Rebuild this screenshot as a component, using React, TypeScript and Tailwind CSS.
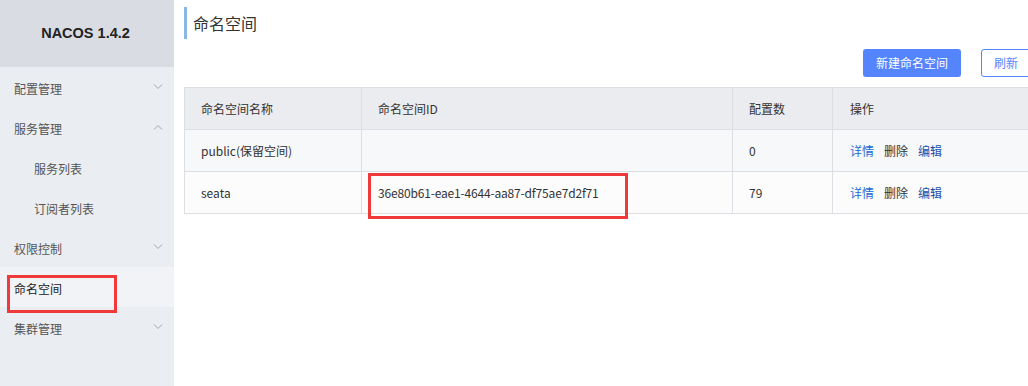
import React from "react";

const font = { fontFamily: '"Noto Sans CJK SC", "Liberation Sans", sans-serif' };

function Chevron({ up = false }: { up?: boolean }) {
  return (
    <svg width="10" height="6" viewBox="0 0 10 6" className="text-[#a0a4ab]">
      {up ? (
        <path d="M1 5.5 L5 1.5 L9 5.5" fill="none" stroke="currentColor" strokeWidth="1" />
      ) : (
        <path d="M1 0.5 L5 4.5 L9 0.5" fill="none" stroke="currentColor" strokeWidth="1" />
      )}
    </svg>
  );
}

function NavItem({
  label,
  sub = false,
  chevron,
  active = false,
  boxed = false,
}: {
  label: string;
  sub?: boolean;
  chevron?: "up" | "down";
  active?: boolean;
  boxed?: boolean;
}) {
  return (
    <div
      className={`relative h-[40px] flex items-center justify-between pr-[11px] ${sub ? "pl-[34px]" : "pl-[14px]"} ${active ? "bg-[#f2f3f6] text-[#222]" : "text-[#555]"}`}
    >
      <span className="text-[12px] pt-[3px]">{label}</span>
      {chevron && <Chevron up={chevron === "up"} />}
      {boxed && (
        <div className="absolute left-[7px] top-[8px] w-[110px] h-[38px] border-[3px] border-[#f03a3a]" />
      )}
    </div>
  );
}

export default function App() {
  const rows = [
    { name: "public(保留空间)", id: "", count: "0", bg: "bg-[#f7f8fa]" },
    { name: "seata", id: "36e80b61-eae1-4644-aa87-df75ae7d2f71", count: "79", bg: "bg-[#fcfcfd]" },
  ];
  return (
    <div className="w-[1028px] h-[386px] flex overflow-hidden bg-white" style={font}>
      <aside className="w-[174px] shrink-0 bg-[#eaedf1] flex flex-col">
        <div className="h-[67px] bg-[#d9dde3] flex items-center justify-center">
          <span
            className="font-bold text-[#222] pr-[3px]"
            style={{ fontFamily: '"Liberation Sans", sans-serif', fontSize: "14.5px" }}
          >
            NACOS 1.4.2
          </span>
        </div>
        <NavItem label="配置管理" chevron="down" />
        <NavItem label="服务管理" chevron="up" />
        <NavItem label="服务列表" sub />
        <NavItem label="订阅者列表" sub />
        <NavItem label="权限控制" chevron="down" />
        <NavItem label="命名空间" active boxed />
        <NavItem label="集群管理" chevron="down" />
      </aside>
      <main className="flex-1 min-w-0 overflow-hidden">
        <div className="w-[870px] pl-[10px]">
          <div className="mt-[7px] h-[32px] border-l-[3px] border-[#8ab8e4] pl-[6px] flex items-center">
            <span className="text-[16px] text-[#333]">命名空间</span>
          </div>
          <div className="mt-[10px] flex justify-end gap-[20px] pr-[13px]">
            <button className="w-[98px] h-[28px] rounded-[3px] bg-[#5584ff] text-white text-[12px]">
              新建命名空间
            </button>
            <button className="w-[50px] h-[28px] rounded-[3px] border border-[#5584ff] bg-white text-[#5584ff] text-[12px]">
              刷新
            </button>
          </div>
          <div className="mt-[10px] w-[860px] border-l border-t border-[#dcdee3] text-[12px] text-[#333]">
            <div className="grid grid-cols-[177px_371px_100px_212px] h-[42px] bg-[#ebecf0] border-b border-[#dcdee3]">
              <div className="flex items-center pl-[16px] border-r border-[#dcdee3]">命名空间名称</div>
              <div className="flex items-center pl-[16px] border-r border-[#dcdee3]">命名空间ID</div>
              <div className="flex items-center pl-[16px] border-r border-[#dcdee3]">配置数</div>
              <div className="flex items-center pl-[17px]">操作</div>
            </div>
            {rows.map((r, i) => (
              <div
                key={i}
                className={`grid grid-cols-[177px_371px_100px_212px] h-[42px] border-b border-[#dcdee3] ${r.bg}`}
              >
                <div className="flex items-center pl-[16px] border-r border-[#dcdee3]">{r.name}</div>
                <div className="relative flex items-center pl-[16px] border-r border-[#dcdee3]">
                  <span className="tracking-[-0.17px]">{r.id}</span>
                  {r.id && (
                    <div className="absolute left-[6px] top-[1px] w-[260px] h-[46px] border-[3px] border-[#f03a3a]" />
                  )}
                </div>
                <div className="flex items-center pl-[16px] border-r border-[#dcdee3]">{r.count}</div>
                <div className="flex items-center pl-[17px] gap-[10px]">
                  <span className="text-[#2369d6]">详情</span>
                  <span className="text-[#333]">删除</span>
                  <span className="text-[#1e4da8]">编辑</span>
                </div>
              </div>
            ))}
          </div>
        </div>
      </main>
    </div>
  );
}
